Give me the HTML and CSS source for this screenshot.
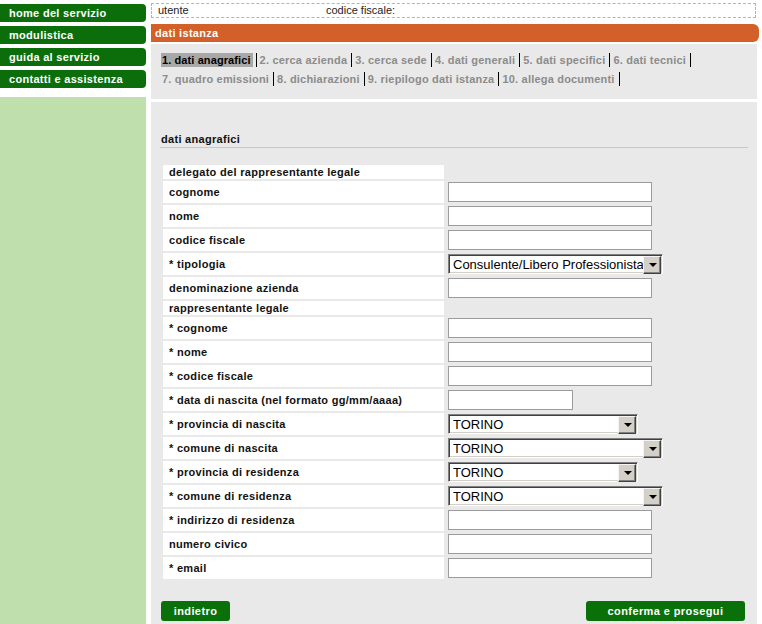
FILE: index.html
```html
<!DOCTYPE html>
<html lang="it">
<head>
<meta charset="utf-8">
<title>dati istanza</title>
<link rel="stylesheet" href="styles.css">
</head>
<body>
<div class="page">
  <aside class="side">
    <nav class="nav">
      <a class="nav-item" href="#">home del servizio</a>
      <a class="nav-item" href="#">modulistica</a>
      <a class="nav-item" href="#">guida al servizio</a>
      <a class="nav-item" href="#">contatti e assistenza</a>
    </nav>
    <div class="side-fill"></div>
  </aside>
  <main class="main">
    <div class="userbar"><span>utente</span><span>codice fiscale:</span></div>
    <div class="titlebar">dati istanza</div>
    <div class="steps">
      <div class="step-row">
        <span class="step active">1. dati anagrafici</span><span class="sep"></span>
        <span class="step">2. cerca azienda</span><span class="sep"></span>
        <span class="step">3. cerca sede</span><span class="sep"></span>
        <span class="step">4. dati generali</span><span class="sep"></span>
        <span class="step">5. dati specifici</span><span class="sep"></span>
        <span class="step">6. dati tecnici</span><span class="sep"></span>
      </div>
      <div class="step-row">
        <span class="step">7. quadro emissioni</span><span class="sep"></span>
        <span class="step">8. dichiarazioni</span><span class="sep"></span>
        <span class="step">9. riepilogo dati istanza</span><span class="sep"></span>
        <span class="step">10. allega documenti</span><span class="sep"></span>
      </div>
    </div>
    <div class="form-panel">
      <h2 class="section-title">dati anagrafici</h2>
      <table class="form-table">
        <tr class="group"><td class="label">delegato del rappresentante legale</td><td class="field"></td></tr>
        <tr><td class="label">cognome</td><td class="field"><input class="text" type="text"></td></tr>
        <tr><td class="label">nome</td><td class="field"><input class="text" type="text"></td></tr>
        <tr><td class="label">codice fiscale</td><td class="field"><input class="text" type="text"></td></tr>
        <tr><td class="label">* tipologia</td><td class="field"><span class="select wide"><select><option>Consulente/Libero Professionista</option></select></span></td></tr>
        <tr><td class="label">denominazione azienda</td><td class="field"><input class="text" type="text"></td></tr>
        <tr class="group"><td class="label">rappresentante legale</td><td class="field"></td></tr>
        <tr><td class="label">* cognome</td><td class="field"><input class="text" type="text"></td></tr>
        <tr><td class="label">* nome</td><td class="field"><input class="text" type="text"></td></tr>
        <tr><td class="label">* codice fiscale</td><td class="field"><input class="text" type="text"></td></tr>
        <tr><td class="label">* data di nascita (nel formato gg/mm/aaaa)</td><td class="field"><input class="text short" type="text"></td></tr>
        <tr><td class="label">* provincia di nascita</td><td class="field"><span class="select mid"><select><option>TORINO</option></select></span></td></tr>
        <tr><td class="label">* comune di nascita</td><td class="field"><span class="select wide"><select><option>TORINO</option></select></span></td></tr>
        <tr><td class="label">* provincia di residenza</td><td class="field"><span class="select mid"><select><option>TORINO</option></select></span></td></tr>
        <tr><td class="label">* comune di residenza</td><td class="field"><span class="select wide"><select><option>TORINO</option></select></span></td></tr>
        <tr><td class="label">* indirizzo di residenza</td><td class="field"><input class="text" type="text"></td></tr>
        <tr><td class="label">numero civico</td><td class="field"><input class="text" type="text"></td></tr>
        <tr><td class="label">* email</td><td class="field"><input class="text" type="text"></td></tr>
      </table>
      <div class="actions">
        <button class="btn btn-back" type="button">indietro</button>
        <button class="btn btn-next" type="button">conferma e prosegui</button>
      </div>
    </div>
  </main>
</div>
</body>
</html>
```
FILE: styles.css
```css
* { box-sizing: border-box; }
html, body { margin: 0; padding: 0; }
body {
  background: #fff;
  font-family: "Liberation Sans", Arial, sans-serif;
  font-size: 11px;
  color: #111;
}
.page {
  display: flex;
  gap: 5px;
  min-height: 100vh;
}
.side {
  width: 146px;
  flex: 0 0 146px;
  display: flex;
  flex-direction: column;
}
.nav {
  display: flex;
  flex-direction: column;
  gap: 4px;
  padding-top: 4px;
}
.nav-item {
  display: block;
  height: 18px;
  line-height: 18px;
  padding-left: 9px;
  background: #0b6e0b;
  color: #fff;
  font-weight: bold;
  letter-spacing: 0.3px;
  text-decoration: none;
  border-radius: 0 4px 4px 0;
}
.side-fill {
  flex: 1;
  margin-top: 9px;
  background: #bfe0ad;
}
.main {
  flex: 1;
  display: flex;
  flex-direction: column;
}
.userbar {
  margin: 3px 6px 0 0;
  height: 15px;
  border: 1px dashed #b4b4b4;
  display: grid;
  grid-template-columns: 168px 1fr;
  padding-left: 6px;
  line-height: 13px;
  color: #222;
}
.titlebar {
  margin: 6px 3px 0 0;
  height: 18px;
  line-height: 18px;
  padding-left: 4px;
  background: #d36028;
  color: #fff;
  font-weight: bold;
  letter-spacing: 0.3px;
  border-radius: 0 6px 6px 0;
}
.steps {
  margin: 2px 5px 0 0;
  height: 55px;
  background: #e8e9e8;
  padding: 6px 0 0 10px;
}
.step-row {
  display: flex;
  align-items: center;
  height: 19px;
}
.step {
  font-weight: bold;
  letter-spacing: 0.2px;
  color: #8c8c8c;
  line-height: 14px;
  padding: 0 1px;
  white-space: nowrap;
}
.step.active {
  background: #a8a8a8;
  color: #000;
  letter-spacing: 0.1px;
  padding: 0 2px 0 1px;
}
.sep {
  width: 1px;
  height: 14px;
  background: #000;
  margin: 0 2px 0 3px;
}
.form-panel {
  flex: 1;
  margin: 3px 5px 0 0;
  background: #e8e9e8;
  padding: 30px 9px 0 9px;
}
.section-title {
  margin: 0;
  font-size: 11px;
  font-weight: bold;
  letter-spacing: 0.3px;
  line-height: 14px;
  padding: 0 0 1px 1px;
  border-bottom: 1px solid #c8c8c8;
  color: #111;
}
.form-table {
  margin: 15px 0 0 1px;
  border-collapse: separate;
  border-spacing: 2px;
}
.form-table td {
  padding: 0;
  vertical-align: middle;
}
.form-table .label {
  width: 281px;
  height: 22px;
  padding-left: 6px;
  background: #fff;
  font-weight: bold;
  letter-spacing: 0.3px;
  line-height: 13px;
  color: #111;
}
.form-table .group .label {
  height: 14px;
}
.form-table .field {
  padding-left: 2px;
}
.text {
  display: block;
  width: 204px;
  height: 20px;
  margin: 0;
  border: 1px solid #9c9c9c;
  background: #fff;
  font: 13px "Liberation Sans", Arial, sans-serif;
  padding: 0 3px;
}
.text.short { width: 125px; }
.select {
  position: relative;
  display: block;
  height: 20px;
}
.select.wide { width: 215px; }
.select.mid { width: 190px; }
.select select {
  -webkit-appearance: none;
  appearance: none;
  display: block;
  width: 100%;
  height: 20px;
  margin: 0;
  padding: 0 0 0 4px;
  font: 13px "Liberation Sans", Arial, sans-serif;
  color: #000;
  background: #fff;
  border: 1px solid;
  border-color: #808080 #ffffff #ffffff #808080;
  box-shadow: inset 1px 1px 0 #404040, inset -1px -1px 0 #d4d0c8;
  border-radius: 0;
  outline: none;
}
.select::before {
  content: "";
  position: absolute;
  top: 2px;
  right: 2px;
  width: 16px;
  height: 16px;
  background: #d4d0c8;
  border: 1px solid;
  border-color: #f4f4f4 #404040 #404040 #f4f4f4;
  box-shadow: inset -1px -1px 0 #808080;
  pointer-events: none;
}
.select::after {
  content: "";
  position: absolute;
  top: 9px;
  right: 6px;
  width: 0;
  height: 0;
  border-left: 4px solid transparent;
  border-right: 4px solid transparent;
  border-top: 4px solid #000;
  pointer-events: none;
}
.actions {
  display: flex;
  justify-content: space-between;
  margin-top: 20px;
  padding: 0 3px 0 1px;
}
.btn {
  height: 20px;
  border: none;
  border-radius: 3px;
  background: #0a700a;
  color: #fff;
  font: bold 11px "Liberation Sans", Arial, sans-serif;
  letter-spacing: 0.4px;
  padding: 0;
  cursor: pointer;
}
.btn-back { width: 69px; }
.btn-next { width: 159px; }
```
